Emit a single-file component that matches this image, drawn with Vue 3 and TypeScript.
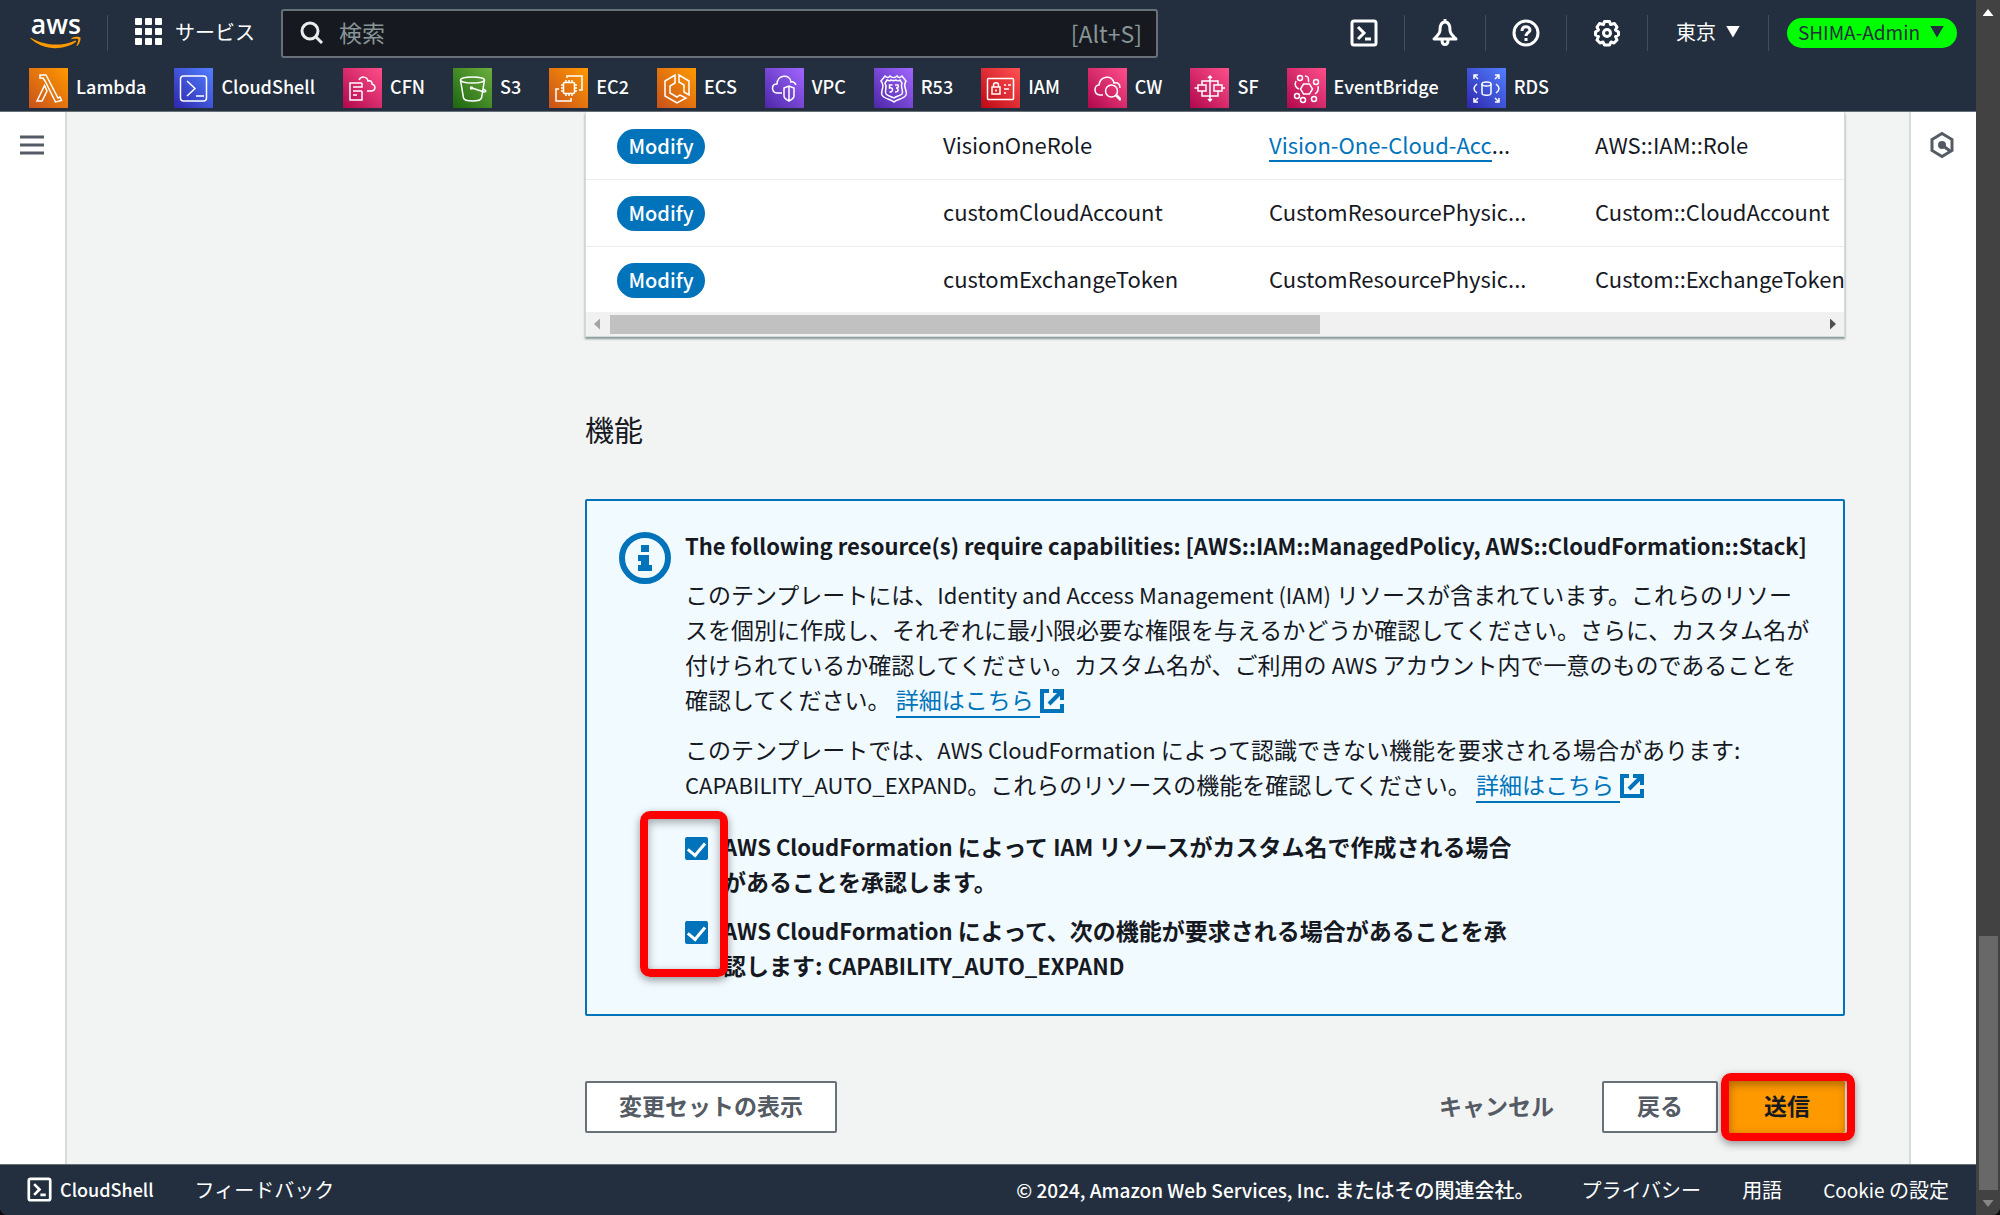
<script setup lang="ts">
import { ref } from 'vue'

interface Favorite {
  name: string
  tone: 'orange' | 'blue' | 'pink' | 'green' | 'purple' | 'red'
  icon: string
}

interface Change {
  action: string
  logicalId: string
  physicalId: string
  linked: boolean
  type: string
}

const favorites: Favorite[] = [
  {
    name: 'Lambda',
    tone: 'orange',
    icon: '<path d="M11 8h6l12 23 2-1 1.500 3.500-6 1.500L16 14l-2-3h-3z M15.500 18.500L8 34h5l5-10z" transform="translate(0 -1)"/>',
  },
  {
    name: 'CloudShell',
    tone: 'blue',
    icon: '<rect x="6.500" y="8" width="26" height="25" rx="3"/><path d="M13 13l8 7.500-8 7.500M22 28h8"/>',
  },
  {
    name: 'CFN',
    tone: 'pink',
    icon: '<path d="M19 23v9H7V15h12M10 19h6M10 23h9M10 27h4M19 15v4h-9M16 12c2-4 8-4 9 1 3-1 4 1 4 3 4 1 4 7-1 7h-4"/>',
  },
  {
    name: 'S3',
    tone: 'green',
    icon: '<ellipse cx="19.500" cy="12" rx="12" ry="3"/><path d="M7.500 12l3 18c1 4 17 4 18 0l3-18M19 20l12 4c3 0 2-2-1-3"/><circle cx="18.500" cy="20" r="1"/>',
  },
  {
    name: 'EC2',
    tone: 'orange',
    icon: '<rect x="14.500" y="14.500" width="11" height="11" rx="1"/><path d="M17 12v2M20 12v2M23 12v2M17 26v2M20 26v2M23 26v2M12 17h2M12 20h2M12 23h2M26 17h2M26 20h2M26 23h2M18 10V8h15v14h-3M10 21H7v12h15v-3"/>',
  },
  {
    name: 'ECS',
    tone: 'orange',
    icon: '<path d="M18 7v8l-5 3v7l7 4 3-2 6 3-9 5-12-7V13zM22 7l10 6v14l-5-3v-7l-5-3z"/>',
  },
  {
    name: 'VPC',
    tone: 'purple',
    icon: '<path d="M17 25h-5c-6-1-6-9 0-9 0-9 13-11 14-2 3-1 4 1 5 3M19 20l5-2 5 2v8c0 2-3 4-5 5-2-1-5-3-5-5zM24 18v15"/>',
  },
  {
    name: 'R53',
    tone: 'purple',
    icon: '<path d="M11 8c2 2 4 2 5 0 2 2 5 2 7 0 1 2 3 2 5 0l4 5c-4 6 2 9 0 14-2 4-9 4-12 7-3-3-10-3-12-7-2-5 4-8-1-14zM13 12c2 1 3 1 4 0 2 1 3 1 5 0 1 1 3 1 4 0l2 3c-2 5 2 7 0 11-2 2-6 2-8 4-3-2-7-2-8-4-2-4 2-6-1-11z"/><path d="M18.500 17h-3v3c4-1 4 4 0 4M21 17h3c1 2 0 3-2 3 3 0 3 4-1 4"/>',
  },
  {
    name: 'IAM',
    tone: 'red',
    icon: '<rect x="6.500" y="10.500" width="26" height="21" rx="1"/><rect x="11" y="19" width="8" height="7"/><path d="M12.500 19v-2c0-3 5-3 5 0v2M15 21.500v2M23 17h2M27 17h3M23 21h5M23 25h2"/>',
  },
  {
    name: 'CW',
    tone: 'pink',
    icon: '<path d="M15 27h-3c-7-1-6-10-1-10 1-9 13-11 15-2 4-1 6 1 6 5"/><circle cx="23.500" cy="23" r="6"/><path d="M27 27l5 5c1-1 0-2-3-5"/>',
  },
  {
    name: 'SF',
    tone: 'pink',
    icon: '<rect x="8" y="17" width="8" height="6"/><rect x="24" y="17" width="8" height="6"/><path d="M20 8v5M12 17v-4h16v4M12 23v5h16v-5M20 28v4M20 13v15M4.500 20H8M32 20h3M18 10l2-2 2 2M18 31l2 2 2-2"/>',
  },
  {
    name: 'EventBridge',
    tone: 'pink',
    icon: '<path d="M16.500 16h6l3 5-3 5h-6l-3-5z"/><circle cx="13" cy="10" r="2.500"/><circle cx="29" cy="14" r="2.500"/><circle cx="10" cy="28" r="2.500"/><circle cx="16" cy="32" r="2.500"/><circle cx="27" cy="31" r="2.500"/><path d="M18 8c6 1 2 4 4 6M9 13c-2 4 0 7 3 8M31 18c1 4 0 6-3 8"/>',
  },
  {
    name: 'RDS',
    tone: 'blue',
    icon: '<ellipse cx="19.500" cy="16" rx="4.500" ry="2"/><path d="M15 16v9c0 3 9 3 9 0v-9M10 16c-4 3-4 6 0 9M29 16c4 3 4 6 0 9M7 7l4 4M7 11V7h4M32 7l-4 4M28 7h4v4M7 34l4-4M7 30v4h4M32 34l-4-4M28 34h4v-4"/>',
  },
]

const changes: Change[] = [
  { action: 'Modify', logicalId: 'VisionOneRole', physicalId: 'Vision-One-Cloud-Acc', linked: true, type: 'AWS::IAM::Role' },
  { action: 'Modify', logicalId: 'customCloudAccount', physicalId: 'CustomResourcePhysic', linked: false, type: 'Custom::CloudAccount' },
  { action: 'Modify', logicalId: 'customExchangeToken', physicalId: 'CustomResourcePhysic', linked: false, type: 'Custom::ExchangeToken' },
]

const query = ref('')
const ackNamedIam = ref(true)
const ackAutoExpand = ref(true)
</script>

<template>
  <div class="app">
    <div class="window">
      <header>
        <div class="topbar">
          <a href="#" class="logo" aria-label="AWS">
            <svg viewBox="0 0 304 186" width="51" height="31" overflow="visible">
              <text x="4" y="98" class="logo-text">aws</text>
              <path fill="#ff9900" d="M273.500 143.700c-32.900 24.300-80.700 37.200-121.800 37.200-57.600 0-109.500-21.300-148.700-56.700-3.100-2.800-.3-6.600 3.400-4.400 42.400 24.600 94.700 39.500 148.800 39.500 36.500 0 76.600-7.600 113.500-23.200 5.500-2.500 10.200 3.600 4.800 7.600z" />
              <path fill="#ff9900" d="M287.200 128.100c-4.200-5.400-27.800-2.600-38.500-1.300-3.200.4-3.700-2.400-.8-4.500 18.800-13.200 49.700-9.400 53.300-5 3.600 4.500-1 35.400-18.600 50.200-2.700 2.300-5.300 1.100-4.100-1.900 3.900-9.900 12.900-32.200 8.700-37.500z" />
            </svg>
          </a>
          <span class="sep logo-sep"></span>
          <button type="button" class="services">
            <svg width="27" height="27" viewBox="0 0 27 27" fill="#fff">
              <template v-for="r in 3" :key="r">
                <rect v-for="c in 3" :key="c" :x="(c - 1) * 10" :y="(r - 1) * 10" width="7" height="7" rx="1" />
              </template>
            </svg>
            サービス
          </button>
          <label class="search">
            <svg width="24" height="24" viewBox="0 0 24 24" fill="none" stroke="#eaeded" stroke-width="3">
              <circle cx="10" cy="10" r="8" />
              <path d="M15.500 15.500L22 22" />
            </svg>
            <input v-model="query" type="text" placeholder="検索" aria-label="検索" />
            <span class="hint">[Alt+S]</span>
          </label>
          <div class="tools">
            <button type="button" class="tool" aria-label="CloudShell">
              <svg width="28" height="28" viewBox="0 0 28 28" fill="none" stroke="#fff" stroke-width="3">
                <rect x="2" y="2" width="24" height="24" rx="2" />
                <path d="M8 8l6 6-6 6M15 20h6" />
              </svg>
            </button>
            <span class="sep"></span>
            <button type="button" class="tool" aria-label="Notifications">
              <svg width="28" height="28" viewBox="0 0 28 28" fill="none" stroke="#fff" stroke-width="3">
                <path d="M14 3c-4 0-5 3-5 8 0 4-3 6-6 9h22c-3-3-6-5-6-9 0-5-1-8-5-8zM11 21c0 6 6 6 6 0M14 0v3" stroke-linejoin="round" />
              </svg>
            </button>
            <span class="sep"></span>
            <button type="button" class="tool" aria-label="Help">
              <svg width="28" height="28" viewBox="0 0 28 28" fill="none" stroke="#fff" stroke-width="3">
                <circle cx="14" cy="14" r="12" />
                <path d="M10 12c0-6 8-5 8-1 0 3-4 2-4 6M14 19v3" />
              </svg>
            </button>
            <span class="sep"></span>
            <button type="button" class="tool" aria-label="Settings">
              <svg width="28" height="28" viewBox="0 0 28 28" fill="none" stroke="#fff" stroke-width="3">
                <path d="M11.500 2.500h5l1 3 4-1 2.500 3.500-1.500 3 3 2v3l-3 1.500 1.500 3.500-3 3-3-1-1.500 3h-5l-1.500-3-3 1-3-3 1.500-3.500-3-1.500v-3l3-2L4 8l2.500-3.500 4 1z" stroke-linejoin="round" />
                <circle cx="14" cy="14" r="3.500" />
              </svg>
            </button>
            <span class="sep"></span>
            <button type="button" class="region">東京<i class="caret"></i></button>
            <span class="sep"></span>
            <button type="button" class="account">SHIMA-Admin<i class="caret"></i></button>
          </div>
        </div>
        <nav class="favorites">
          <a v-for="f in favorites" :key="f.name" href="#" class="favorite">
            <svg :class="['tile', f.tone]" viewBox="0 0 39 40" width="39" height="40" v-html="f.icon"></svg>
            <span class="favorite-name">{{ f.name }}</span>
          </a>
        </nav>
      </header>

      <div class="body">
        <aside class="left">
          <button type="button" class="plain" aria-label="Menu">
            <svg width="24" height="22" viewBox="0 0 24 22" stroke="#545b64" stroke-width="3">
              <path d="M0 3h24M0 11h24M0 19h24" />
            </svg>
          </button>
        </aside>

        <main>
          <section class="panel">
            <div class="table-clip">
              <table>
                <tbody>
                  <tr v-for="c in changes" :key="c.logicalId">
                    <td><span class="pill">{{ c.action }}</span></td>
                    <td>{{ c.logicalId }}</td>
                    <td>
                      <a v-if="c.linked" href="#" class="link">{{ c.physicalId }}</a>
                      <template v-else>{{ c.physicalId }}</template>...
                    </td>
                    <td>{{ c.type }}</td>
                    <td></td>
                  </tr>
                </tbody>
              </table>
            </div>
            <div class="hscroll">
              <i class="arrow-left"></i>
              <div class="htrack"><div class="hthumb"></div></div>
              <i class="arrow-right"></i>
            </div>
          </section>

          <h2>機能</h2>

          <section class="alert">
            <svg class="info" width="52" height="52" viewBox="0 0 52 52">
              <circle cx="26" cy="26" r="23" fill="none" stroke="#0073bb" stroke-width="6" />
              <path fill="#0073bb" d="M22 13h8v7h-8zM19 23h11v10h3v6H19v-6h3v-4h-3z" />
            </svg>
            <div class="alert-body">
              <h3>The following resource(s) require capabilities: [AWS::IAM::ManagedPolicy, AWS::CloudFormation::Stack]</h3>
              <p>
                このテンプレートには、<span class="latin">Identity and Access Management (IAM)</span> リソースが含まれています。これらのリソー<br />スを個別に作成し、それぞれに最小限必要な権限を与えるかどうか確認してください。さらに、カスタム名が付けられているか確認してください。カスタム名が、ご利用の <span class="latin">AWS</span> アカウント内で一意のものであることを確認してください。
                <a href="#" class="link more">詳細はこちら</a><svg class="ext" width="24" height="24" viewBox="0 0 24 24" fill="none" stroke="#0073bb" stroke-width="4"><path d="M9 2H2v20h20v-7M13 2h9v9M22 2L9 15" /></svg>
              </p>
              <p>
                このテンプレートでは、<span class="latin">AWS CloudFormation</span> によって認識できない機能を要求される場合があります: <span class="latin">CAPABILITY_AUTO_EXPAND</span>。これらのリソースの機能を確認してください。
                <a href="#" class="link more">詳細はこちら</a><svg class="ext" width="24" height="24" viewBox="0 0 24 24" fill="none" stroke="#0073bb" stroke-width="4"><path d="M9 2H2v20h20v-7M13 2h9v9M22 2L9 15" /></svg>
              </p>
              <div class="acks">
                <label>
                  <input v-model="ackNamedIam" type="checkbox" />
                  <span><span class="latin">AWS CloudFormation</span> によって <span class="latin">IAM</span> リソースがカスタム名で作成される場合があることを承認します。</span>
                </label>
                <label>
                  <input v-model="ackAutoExpand" type="checkbox" />
                  <span><span class="latin">AWS CloudFormation</span> によって、次の機能が要求される場合があることを承認します: <span class="latin">CAPABILITY_AUTO_EXPAND</span></span>
                </label>
                <div class="callout callout-acks"></div>
              </div>
            </div>
          </section>

          <div class="actions">
            <button type="button" class="btn">変更セットの表示</button>
            <button type="button" class="btn ghost">キャンセル</button>
            <button type="button" class="btn">戻る</button>
            <div class="submit">
              <button type="button" class="btn primary">送信</button>
              <div class="callout callout-submit"></div>
            </div>
          </div>
        </main>

        <aside class="right">
          <button type="button" class="plain" aria-label="Info">
            <svg width="26" height="28" viewBox="0 0 26 28">
              <path d="M13 2.500l10 6v11l-10 6-10-6v-11z" fill="none" stroke="#545b64" stroke-width="3" />
              <circle cx="13" cy="14" r="4" fill="#545b64" />
              <path d="M13 14l8 6" stroke="#545b64" stroke-width="3" />
            </svg>
          </button>
        </aside>
      </div>

      <footer>
        <a href="#" class="shell">
          <svg width="25" height="25" viewBox="0 0 28 28" fill="none" stroke="#fff" stroke-width="3">
            <rect x="2" y="2" width="24" height="24" rx="2" />
            <path d="M8 8l6 6-6 6M15 20h6" />
          </svg>
          CloudShell
        </a>
        <a href="#">フィードバック</a>
        <span class="copyright"><span class="small">© 2024, Amazon Web Services, Inc.</span> またはその関連会社。</span>
        <a href="#">プライバシー</a>
        <a href="#">用語</a>
        <a href="#"><span class="small">Cookie</span> の設定</a>
      </footer>
    </div>

    <div class="vscroll">
      <i class="arrow-up"></i>
      <div class="vthumb"></div>
      <i class="arrow-down"></i>
    </div>
  </div>
</template>

<style>
body {
  margin: 0;
  background: #0b0c0f;
}
</style>

<style scoped>
* {
  box-sizing: border-box;
}

.app {
  display: flex;
  min-height: 100vh;
  overflow: hidden;
  border-radius: 0 0 8px 8px;
  background: #424242;
  color: #16191f;
  font-family: "Noto Sans CJK JP", "Noto Sans", sans-serif;
  font-size: 23px;
  line-height: 35px;
}

button,
input {
  font: inherit;
  color: inherit;
}

a {
  color: inherit;
  text-decoration: none;
}

button {
  margin: 0;
  padding: 0;
  border: 0;
  background: none;
  white-space: nowrap;
}

svg {
  display: block;
  flex: none;
}

.latin {
  font-size: 22px;
}

.window {
  display: flex;
  flex: 1;
  min-width: 0;
  flex-direction: column;
}

/* Header */
header {
  height: 112px;
  border-bottom: 1px solid #687078;
  background: #232f3e;
  color: #fff;
}

.topbar {
  display: flex;
  align-items: center;
  height: 66px;
  padding: 0 19px 0 30px;
}

.logo-text {
  font-family: "Open Sans", "Noto Sans", sans-serif;
  font-size: 160px;
  font-weight: 600;
  fill: #fff;
}

.sep {
  width: 1px;
  height: 36px;
  background: #414d5c;
}

.logo-sep {
  margin: 0 27px 0 26px;
}

.services {
  display: flex;
  align-items: center;
  gap: 13px;
  padding-bottom: 3px;
  font-size: 20px;
}

.search {
  display: flex;
  flex: 1;
  align-items: center;
  height: 49px;
  margin-left: 26px;
  padding: 0 14px 0 17px;
  border: 2px solid #687078;
  border-radius: 3px;
  background: #16191f;
}

.search input {
  flex: 1;
  min-width: 0;
  margin-left: 15px;
  padding: 0 0 2px;
  border: 0;
  outline: 0;
  background: none;
}

.search input::placeholder,
.hint {
  color: #879596;
}

.tools {
  display: flex;
  align-items: center;
  margin-left: 192px;
}

.tool {
  margin: 0 26px;
}

.tool:first-child {
  margin-left: 0;
}

.region,
.account {
  display: flex;
  align-items: center;
  gap: 10px;
  padding-bottom: 3px;
  font-size: 20px;
}

.region {
  margin: 0 28px;
}

.account {
  height: 30px;
  margin-left: 18px;
  padding: 0 13px 3px 11px;
  border-radius: 15px;
  background: #00ff00;
  color: #232f3e;
  font-size: 19px;
}

.caret {
  width: 14px;
  height: 12px;
  background: currentColor;
  clip-path: polygon(0 0, 100% 0, 50% 100%);
}

.favorites {
  display: flex;
  align-items: center;
  gap: 28px;
  height: 44px;
  padding-left: 29px;
  font-size: 18px;
  font-weight: 500;
}

.favorite {
  display: flex;
  align-items: center;
  gap: 8px;
}

.favorite-name {
  padding-bottom: 3px;
}

.tile {
  fill: none;
  stroke: #fff;
  stroke-width: 1.5;
}

.orange { background: linear-gradient(45deg, #c8511b, #ff9900); }
.blue { background: linear-gradient(45deg, #2e27ad, #527fff); }
.pink { background: linear-gradient(45deg, #b0084d, #ff4f8b); }
.green { background: linear-gradient(45deg, #1b660f, #6cae3e); }
.purple { background: linear-gradient(45deg, #4d27a8, #a166ff); }
.red { background: linear-gradient(45deg, #bd0816, #ff5252); }

/* Page */
.body {
  display: flex;
  flex: 1;
}

.left,
.right {
  background: #fff;
}

.left {
  width: 67px;
  padding: 17px 0 0 20px;
  border-right: 2px solid #d5dbdb;
}

.right {
  width: 67px;
  padding: 19px 0 0 18px;
  border-left: 2px solid #d5dbdb;
}

main {
  flex: 1;
  min-width: 0;
  padding: 0 64px 30px 518px;
  background: #f2f3f3;
}

.panel {
  overflow: hidden;
  border: 1px solid #d5dbdb;
  border-top: 0;
  background: #fff;
  box-shadow: 0 2px 2px #879596;
}

.table-clip {
  overflow: hidden;
}

table {
  width: 2200px;
  table-layout: fixed;
  border-collapse: collapse;
  font-size: 22px;
}

td {
  width: 326px;
  height: 67px;
  padding: 0 0 2px 31px;
  border-bottom: 1px solid #eaeded;
  white-space: nowrap;
}

td:last-child {
  width: auto;
}

tr:last-child td {
  height: 66px;
  border-bottom: 0;
}

.pill {
  display: inline-block;
  width: 88px;
  padding-bottom: 2px;
  border-radius: 18px;
  background: #0073bb;
  color: #fff;
  font-size: 20px;
  font-weight: 500;
  line-height: 33px;
  text-align: center;
  vertical-align: middle;
}

.link {
  border-bottom: 2px solid #0073bb;
  color: #0073bb;
}

.hscroll {
  display: flex;
  align-items: center;
  height: 24px;
  padding: 0 8px;
  background: #f1f1f1;
}

.htrack {
  flex: 1;
  padding: 0 16px 0 10px;
}

.hthumb {
  width: 59%;
  height: 19px;
  background: #c1c1c1;
}

.arrow-left,
.arrow-right {
  width: 6px;
  height: 11px;
}

.arrow-left {
  background: #a3a3a3;
  clip-path: polygon(100% 0, 100% 100%, 0 50%);
}

.arrow-right {
  background: #505050;
  clip-path: polygon(0 0, 100% 50%, 0 100%);
}

h2 {
  margin: 74px 0 52px;
  font-size: 29px;
  font-weight: 400;
  line-height: 36px;
}

.alert {
  display: flex;
  gap: 14px;
  padding: 27px 28px 31px 32px;
  border: 2px solid #0073bb;
  border-radius: 2px;
  background: #f1faff;
}

.info {
  margin-top: 4px;
}

.alert-body {
  flex: 1;
  min-width: 0;
}

h3 {
  margin: 0 0 14px;
  font-size: 22px;
  font-weight: 700;
}

p {
  margin: 0 0 15px;
}

.more {
  padding-right: 6px;
}

.ext {
  display: inline-block;
  vertical-align: -4px;
}

.acks {
  position: relative;
  display: flex;
  flex-direction: column;
  gap: 14px;
  margin-top: 27px;
  font-weight: 700;
}

.acks label {
  display: flex;
  align-items: flex-start;
  gap: 15px;
  max-width: 837px;
}

.acks input {
  display: flex;
  flex: none;
  justify-content: center;
  width: 23px;
  height: 23px;
  margin: 8px 0 0;
  border-radius: 2px;
  appearance: none;
  background: #0073bb;
}

.acks input:checked::after {
  width: 8px;
  height: 14px;
  margin-top: 2px;
  border: solid #fff;
  border-width: 0 3px 3px 0;
  content: "";
  transform: rotate(40deg);
}

.callout {
  position: absolute;
  border: 8px solid #ff0000;
  border-radius: 10px;
  box-shadow: 0 3px 8px rgba(0, 0, 0, 0.4), inset 0 3px 10px rgba(0, 0, 0, 0.35);
  pointer-events: none;
}

.callout-acks {
  top: -18px;
  bottom: 6px;
  left: -45px;
  width: 88px;
}

.actions {
  display: flex;
  align-items: center;
  margin-top: 65px;
}

.btn {
  min-width: 116px;
  height: 52px;
  padding: 0 32px 3px;
  border: 2px solid #687078;
  border-radius: 2px;
  background: #fff;
  color: #545b64;
  font-weight: 700;
}

.ghost {
  margin: 0 14px 0 auto;
  border-color: transparent;
  background: none;
}

.submit {
  position: relative;
  margin-left: 11px;
}

.primary {
  border-color: #ff9900;
  background: #ff9900;
  color: #16191f;
}

.callout-submit {
  inset: -8px -10px -8px -8px;
}

/* Footer */
footer {
  display: flex;
  align-items: center;
  gap: 41px;
  height: 51px;
  padding: 0 27px 2px;
  border-top: 1px solid #687078;
  background: #232f3e;
  color: #fff;
  font-size: 20px;
  white-space: nowrap;
}

.small {
  font-size: 19px;
}

.shell {
  display: flex;
  align-items: center;
  gap: 8px;
  font-size: 18px;
  font-weight: 500;
}

.copyright {
  margin: 0 6px 0 auto;
  font-weight: 500;
}

/* Window scroll bar */
.vscroll {
  display: flex;
  flex: none;
  flex-direction: column;
  align-items: center;
  width: 24px;
  padding: 9px 0 8px;
  background: #424242;
}

.arrow-up,
.arrow-down {
  width: 11px;
  height: 7px;
}

.arrow-up {
  background: #fff;
  clip-path: polygon(50% 0, 100% 100%, 0 100%);
}

.arrow-down {
  background: #868686;
  clip-path: polygon(0 0, 100% 0, 50% 100%);
}

.vthumb {
  width: 19px;
  height: 254px;
  margin: auto 0 10px;
  background: #686868;
}
</style>
